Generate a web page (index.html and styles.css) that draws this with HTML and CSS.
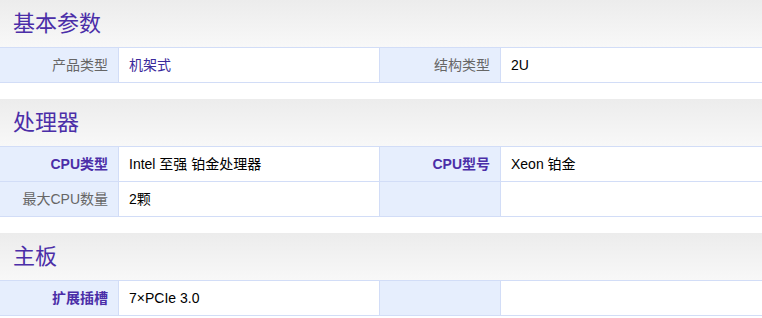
FILE: index.html
```html
<!DOCTYPE html>
<html lang="zh">
<head>
<meta charset="utf-8">
<link rel="stylesheet" href="styles.css">
</head>
<body>
<section class="sec">
  <h2 class="sec-title">基本参数</h2>
  <div class="grid">
    <div class="lab">产品类型</div><div class="val link">机架式</div>
    <div class="lab">结构类型</div><div class="val">2U</div>
  </div>
</section>
<section class="sec">
  <h2 class="sec-title">处理器</h2>
  <div class="grid">
    <div class="lab hl">CPU类型</div><div class="val">Intel 至强 铂金处理器</div>
    <div class="lab hl">CPU型号</div><div class="val">Xeon 铂金</div>
    <div class="lab">最大CPU数量</div><div class="val">2颗</div>
    <div class="lab"></div><div class="val"></div>
  </div>
</section>
<section class="sec">
  <h2 class="sec-title">主板</h2>
  <div class="grid">
    <div class="lab hl">扩展插槽</div><div class="val">7×PCIe 3.0</div>
    <div class="lab"></div><div class="val"></div>
  </div>
</section>
</body>
</html>
```
FILE: styles.css
```css
html, body {
  margin: 0;
  padding: 0;
  background: #fff;
}
body {
  font-family: "Liberation Sans", "Noto Sans CJK SC", sans-serif;
  font-size: 14px;
  color: #000;
  width: 762px;
  overflow: hidden;
}
.sec {
  margin-bottom: 16px;
}
.sec-title {
  margin: 0;
  height: 48px;
  line-height: 47px;
  padding-left: 13px;
  font-size: 22px;
  font-weight: normal;
  color: #4b2ea8;
  background: linear-gradient(#ececec, #f8f8f8);
  border-bottom: 1px solid #d2ddf7;
  box-sizing: border-box;
}
.grid {
  display: grid;
  grid-template-columns: 118px 260px 120px 1fr;
  column-gap: 1px;
  row-gap: 1px;
  background: #d2ddf7;
  border-bottom: 1px solid #d2ddf7;
}
.lab {
  background: #e6eefd;
  color: #666;
  text-align: right;
  padding-right: 10px;
  height: 34px;
  line-height: 35px;
}
.lab.hl {
  color: #4b2ea8;
  font-weight: bold;
}
.val {
  background: #fff;
  padding-left: 10px;
  height: 34px;
  line-height: 35px;
}
.val.link {
  color: #3b2a9c;
}
```
